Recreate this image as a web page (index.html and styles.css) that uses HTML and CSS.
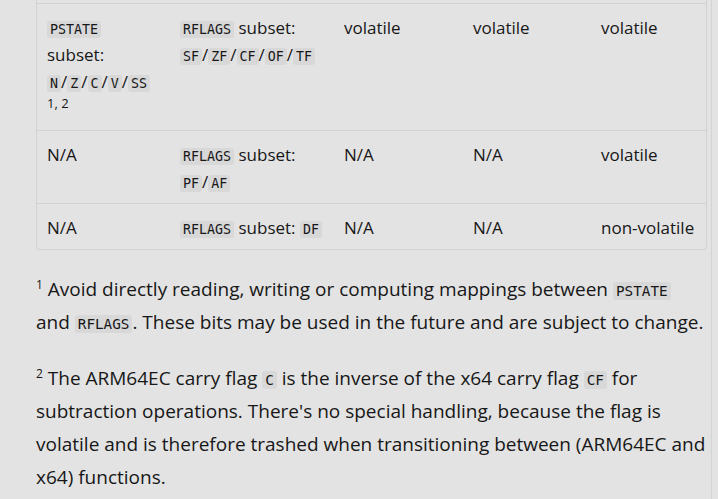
FILE: index.html
```html
<!DOCTYPE html>
<html lang="en">
<head>
    <meta charset="UTF-8" />
    <meta name="viewport" content="width=device-width, initial-scale=1.0" />
    <title>ARM64EC flags</title>
    <link rel="stylesheet" href="styles.css">
</head>
<body>
    <div class="content">
        <div class="table-wrap">
            <table class="flags">
                <colgroup>
                    <col class="c1"><col class="c2"><col class="c3"><col class="c4"><col class="c5">
                </colgroup>
                <tbody>
                    <tr>
                        <td><code>PSTATE</code> subset: <code>N</code>/<code>Z</code>/<code>C</code>/<code>V</code>/<code>SS</code> <sup>1, 2</sup></td>
                        <td><code>RFLAGS</code> subset: <code>SF</code>/<code>ZF</code>/<code>CF</code>/<code>OF</code>/<code>TF</code></td>
                        <td>volatile</td>
                        <td>volatile</td>
                        <td>volatile</td>
                    </tr>
                    <tr>
                        <td>N/A</td>
                        <td><code>RFLAGS</code> subset: <code>PF</code>/<code>AF</code></td>
                        <td>N/A</td>
                        <td>N/A</td>
                        <td>volatile</td>
                    </tr>
                    <tr>
                        <td>N/A</td>
                        <td><code>RFLAGS</code> subset: <code>DF</code></td>
                        <td>N/A</td>
                        <td>N/A</td>
                        <td>non-volatile</td>
                    </tr>
                </tbody>
            </table>
        </div>

        <p class="note"><sup>1</sup> Avoid directly reading, writing or computing mappings between <code>PSTATE</code> and <code>RFLAGS</code>. These bits may be used in the future and are subject to change.</p>

        <p class="note"><sup>2</sup> The ARM64EC carry flag <code>C</code> is the inverse of the x64 carry flag <code>CF</code> for subtraction operations. There's no special handling, because the flag is volatile and is therefore trashed when transitioning between (ARM64EC and x64) functions.</p>
    </div>
</body>
</html>
```

FILE: styles.css
```css
* {
    margin: 0;
    padding: 0;
    box-sizing: border-box;
}

body {
    background-color: #e3e3e3;
    color: #171717;
    font-family: 'Open Sans', 'Noto Sans', sans-serif;
    font-size: 17px;
}

.content {
    padding: 0 4px 0 36px;
    width: 712px;
    border-right: 1px solid #d4d4d4;
    min-height: 100vh;
}

.table-wrap {
    padding-top: 3px;
    border: 1px solid #d2d2d2;
    border-top: none;
    border-radius: 0 0 4px 4px;
}

.flags {
    width: 100%;
    border-collapse: collapse;
    table-layout: fixed;
    line-height: 27px;
}

.c1 { width: 133px; }
.c2 { width: 164px; }
.c3 { width: 129px; }
.c4 { width: 128px; }

.flags td {
    border-top: 1px solid #d2d2d2;
    padding: 10px 10px 8px 10px;
    vertical-align: top;
}

.flags sup {
    font-size: 13px;
    line-height: 0;
    white-space: nowrap;
}

code {
    font-family: 'DejaVu Sans Mono', monospace;
    font-size: 13.3px;
    line-height: 1;
    background-color: #d8d8d8;
    padding: 1px 3px;
    border-radius: 3px;
}

.note {
    font-size: 19px;
    line-height: 33px;
    margin-top: 23px;
}

.note code {
    font-size: 14.3px;
}

.note sup {
    font-size: 12px;
    line-height: 0;
}
```
